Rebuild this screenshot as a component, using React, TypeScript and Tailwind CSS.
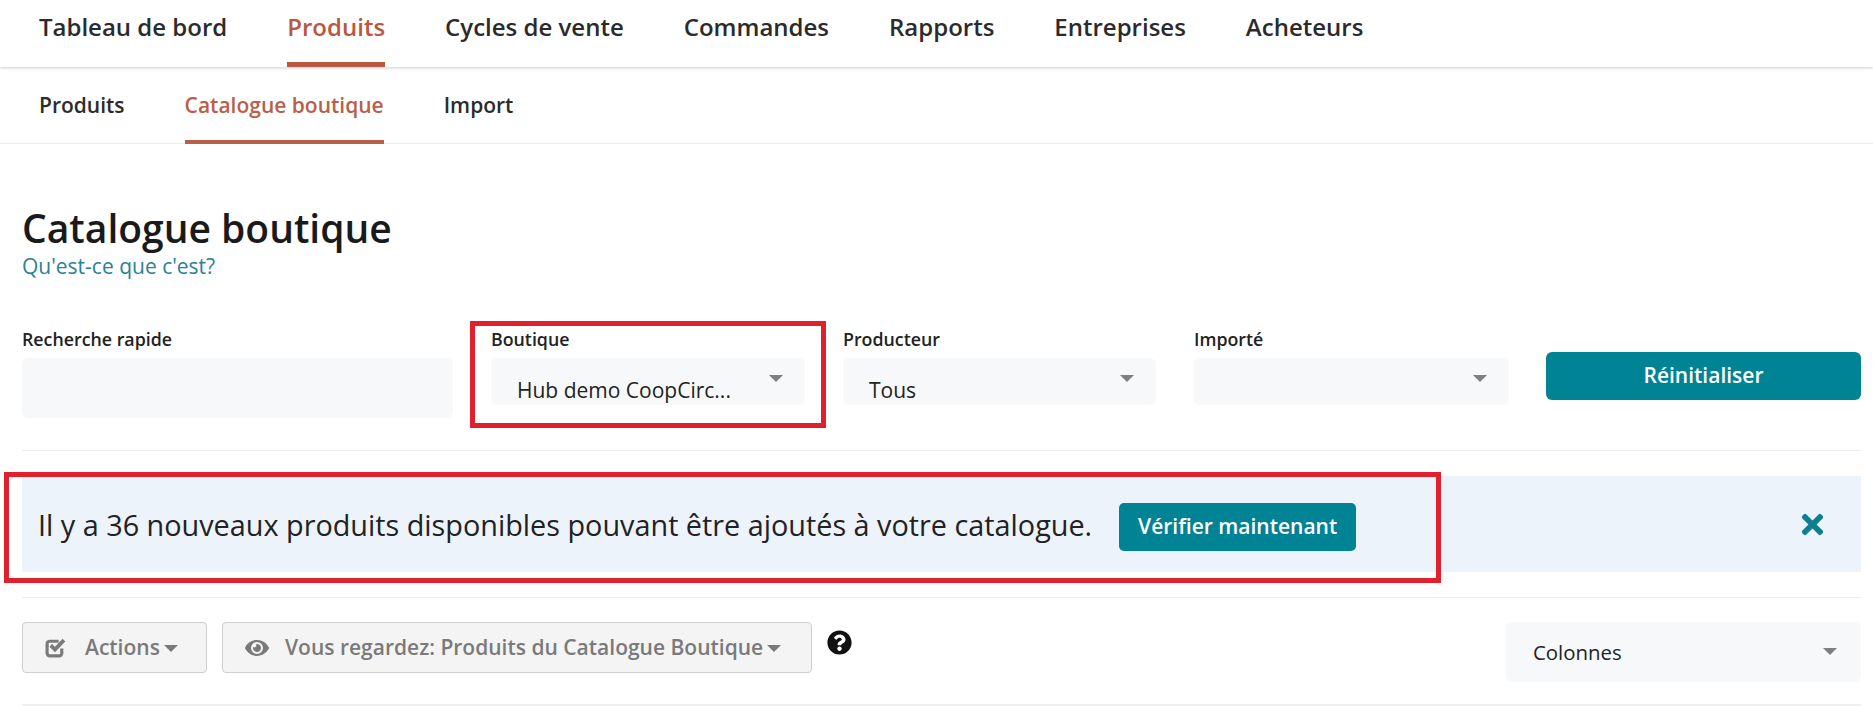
import { FaEye, FaQuestionCircle, FaTimes } from "react-icons/fa";

const mainNav = ["Tableau de bord", "Produits", "Cycles de vente", "Commandes", "Rapports", "Entreprises", "Acheteurs"];
const subNav = ["Produits", "Catalogue boutique", "Import"];

function Caret() {
  return <span className="block h-0 w-0 border-x-[7px] border-t-[7px] border-x-transparent border-t-[#7f7f7f]" />;
}

function SmallCaret() {
  return <span className="ml-[4px] mt-[2px] h-0 w-0 border-x-[7px] border-t-[7px] border-x-transparent border-t-[#7a7a7a]" />;
}

function CheckIcon() {
  return (
    <svg viewBox="0 0 20 20" className="mr-[19px] h-[21px] w-[21px]" fill="none">
      <path d="M16 11v4.5a2.5 2.5 0 0 1-2.5 2.5h-9A2.5 2.5 0 0 1 2 15.5v-9A2.5 2.5 0 0 1 4.5 4H13" stroke="#7a7a7a" strokeWidth="3" />
      <path d="M5.5 8l4 4 8.5-9" stroke="#7a7a7a" strokeWidth="3.6" />
    </svg>
  );
}

function Select({ label, value, width }: { label: string; value: string; width: string }) {
  return (
    <div className={width}>
      <div className="h-[37px] text-[17.8px] font-semibold leading-[37px] text-[#222]">{label}</div>
      <div className="flex h-[47px] justify-between rounded-[6px] bg-[#f7f8fa] pl-[26px] pr-[22px]">
        <span className="pt-[18px] text-[21px] leading-[28px] text-[#222]">{value}</span>
        <span className="pt-[17px]">
          <Caret />
        </span>
      </div>
    </div>
  );
}

export default function App() {
  return (
    <div className="relative h-[706px] w-[1873px] overflow-hidden bg-white font-['Open_Sans',sans-serif]">
      <nav className="flex h-[67px] gap-[60px] pl-[39px] shadow-[0_1px_3px_rgba(0,0,0,0.2)]">
        {mainNav.map((item) => (
          <a
            key={item}
            className={
              item === "Produits"
                ? "h-[67px] border-b-[5px] border-[#bb5740] pt-[10px] text-[24px] font-semibold leading-[33px] text-[#bb5740]"
                : "h-[67px] pt-[10px] text-[24px] font-semibold leading-[33px] text-[#2b2b2b]"
            }
          >
            {item}
          </a>
        ))}
      </nav>

      <nav className="flex h-[77px] gap-[60px] border-b border-[#ededed] pl-[39px]">
        {subNav.map((item) => (
          <a
            key={item}
            className={
              item === "Catalogue boutique"
                ? "h-[77px] border-b-[4px] border-[#b8604a] pt-[24px] text-[21px] font-semibold leading-[29px] text-[#b8604a]"
                : "h-[77px] pt-[24px] text-[21px] font-semibold leading-[29px] text-[#2b2b2b]"
            }
          >
            {item}
          </a>
        ))}
      </nav>

      <main className="pl-[22px] pr-[12px]">
        <h1 className="mt-[59px] text-[39px] font-semibold leading-[50px] text-[#1a1a1a]">Catalogue boutique</h1>
        <a className="mt-[1px] block text-[21px] leading-[24px] text-[#2a8292]">Qu'est-ce que c'est?</a>

        <div className="mt-[43px] flex h-[130px] border-b border-[#ededed]">
          <div className="mr-[38px] w-[431px]">
            <div className="h-[37px] text-[17.8px] font-semibold leading-[37px] text-[#222]">Recherche rapide</div>
            <div className="h-[60px] rounded-[6px] bg-[#f7f8fa]" />
          </div>
          <div className="mr-[38px]">
            <Select label="Boutique" value="Hub demo CoopCirc..." width="w-[314px]" />
          </div>
          <div className="mr-[38px]">
            <Select label="Producteur" value="Tous" width="w-[313px]" />
          </div>
          <div className="mr-[37px]">
            <Select label="Importé" value="" width="w-[315px]" />
          </div>
          <button className="mt-[31px] h-[48px] w-[315px] rounded-[6px] bg-[#008395] text-[21px] font-semibold text-white">
            Réinitialiser
          </button>
        </div>

        <div className="mt-[25px] flex h-[96px] items-center bg-[#edf3fb] pl-[16px] pr-[33px]">
          <span className="pt-[2px] text-[28.8px] text-[#222]">Il y a 36 nouveaux produits disponibles pouvant être ajoutés à votre catalogue.</span>
          <button className="ml-[27px] mt-[5px] h-[48px] w-[237px] rounded-[5px] bg-[#008395] text-[21px] font-semibold text-white">
            Vérifier maintenant
          </button>
          <FaTimes className="ml-auto text-[31px] text-[#0f7f8f]" />
        </div>

        <div className="mt-[25px] flex h-[109px] items-start border-y border-b-2 border-t-[#ededed] border-b-[#efefef] pt-[24px]">
          <button className="flex h-[51px] w-[185px] items-center rounded-[4px] border border-[#cfcfcf] bg-[#f4f4f4] pl-[22px] text-[21px] font-semibold text-[#7a7a7a]">
            <CheckIcon />
            Actions
            <SmallCaret />
          </button>
          <button className="ml-[15px] flex h-[51px] w-[590px] items-center rounded-[4px] border border-[#cfcfcf] bg-[#f4f4f4] pl-[22px] text-[21px] font-semibold text-[#7a7a7a]">
            <FaEye className="mr-[16px] text-[24px]" />
            Vous regardez: Produits du Catalogue Boutique
            <SmallCaret />
          </button>
          <FaQuestionCircle className="ml-[15px] mt-[8px] text-[25px] text-[#111]" />
          <div className="ml-auto flex h-[60px] w-[355px] justify-between rounded-[6px] bg-[#f7f8fa] pl-[27px] pr-[24px]">
            <span className="pt-[17px] text-[20.4px] leading-[27px] text-[#222]">Colonnes</span>
            <span className="pt-[26px]">
              <Caret />
            </span>
          </div>
        </div>
      </main>

      {/* red annotation boxes drawn over the screenshot */}
      <div className="absolute left-[470px] top-[321px] h-[107px] w-[356px] border-[5px] border-[#e21f2d]" />
      <div className="absolute left-[4px] top-[472px] h-[111px] w-[1437px] border-[5px] border-[#e21f2d]" />
    </div>
  );
}
